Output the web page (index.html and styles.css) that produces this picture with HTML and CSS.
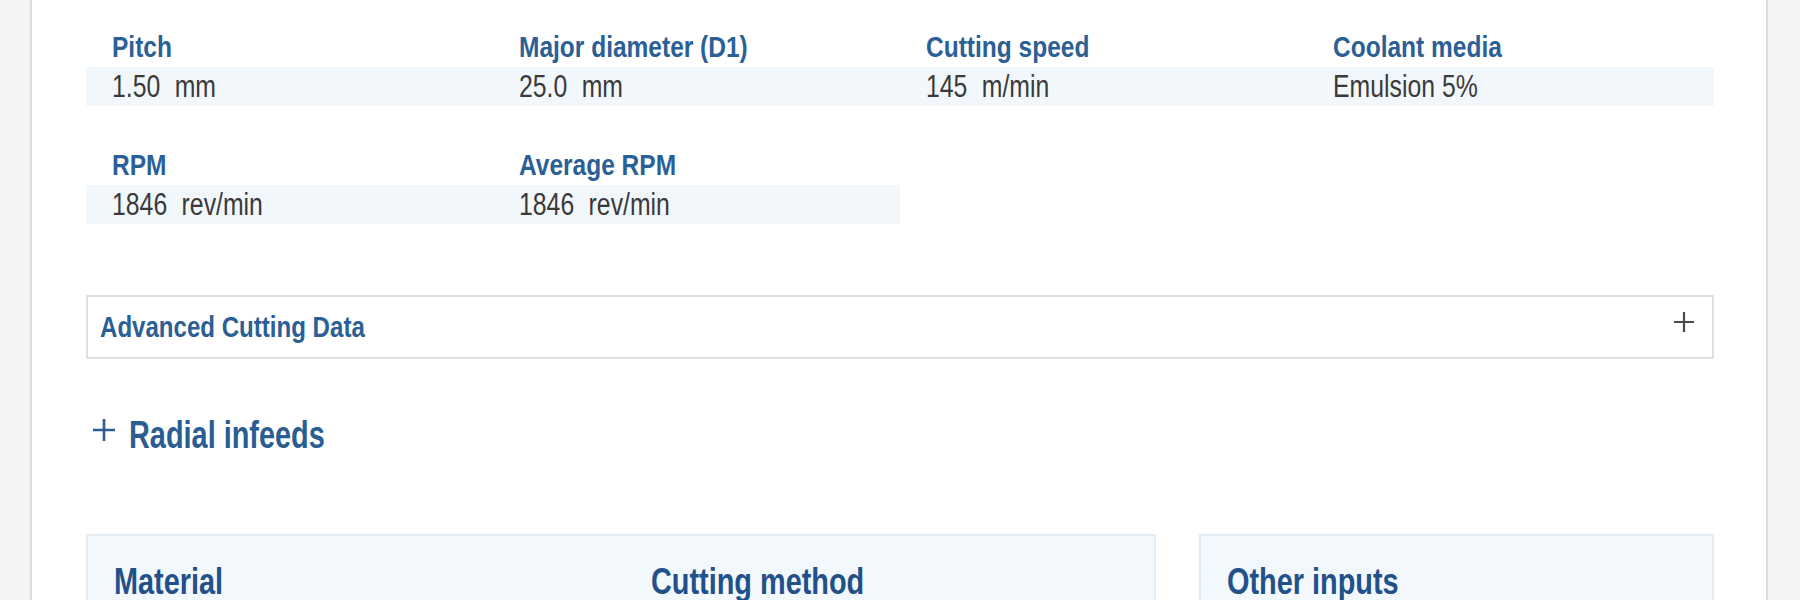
FILE: index.html
```html
<!DOCTYPE html>
<html lang="en">
<head>
<meta charset="utf-8">
<title>Cutting data</title>
<link rel="stylesheet" href="styles.css">
</head>
<body>
<div class="page">
  <div class="card">
    <div class="params">
      <div class="param"><div class="label"><span class="nt">Pitch</span></div><div class="value"><span class="nv">1.50<span class="unit">mm</span></span></div></div>
      <div class="param"><div class="label"><span class="nt">Major diameter (D1)</span></div><div class="value"><span class="nv">25.0<span class="unit">mm</span></span></div></div>
      <div class="param"><div class="label"><span class="nt">Cutting speed</span></div><div class="value"><span class="nv">145<span class="unit">m/min</span></span></div></div>
      <div class="param"><div class="label"><span class="nt">Coolant media</span></div><div class="value"><span class="nv">Emulsion 5%</span></div></div>
      <div class="param"><div class="label"><span class="nt">RPM</span></div><div class="value"><span class="nv">1846<span class="unit">rev/min</span></span></div></div>
      <div class="param"><div class="label"><span class="nt">Average RPM</span></div><div class="value"><span class="nv">1846<span class="unit">rev/min</span></span></div></div>
    </div>

    <div class="accordion">
      <span class="accordion-title">Advanced Cutting Data</span>
      <svg class="accordion-icon" width="22" height="22" viewBox="0 0 22 22"><path d="M11 1v20M1 11h20" stroke="#4a4a4a" stroke-width="2.2" fill="none"/></svg>
    </div>

    <div class="toggle">
      <svg class="toggle-icon" width="22" height="22" viewBox="0 0 22 22"><path d="M11 0v22M0 11h22" stroke="#2a5d92" stroke-width="2.6" fill="none"/></svg>
      <span class="toggle-text">Radial infeeds</span>
    </div>

    <div class="boxes">
      <div class="box box-main">
        <h3 class="box-title"><span class="ht">Material</span></h3>
        <h3 class="box-title"><span class="ht">Cutting method</span></h3>
      </div>
      <div class="box box-side">
        <h3 class="box-title"><span class="ht">Other inputs</span></h3>
      </div>
    </div>
  </div>
</div>
</body>
</html>
```

FILE: styles.css
```css
html, body {
  margin: 0;
  padding: 0;
  height: 100%;
  overflow: hidden;
}
body {
  background: #f4f4f4;
  font-family: "Liberation Sans", Arial, sans-serif;
}
.page {
  padding: 0 32px 0 30px;
}
.card {
  background: #fff;
  border-left: 2px solid #dcdcdc;
  border-right: 2px solid #dcdcdc;
  height: 760px;
  padding: 30px 52px 0 54px;
  box-sizing: border-box;
}
.params {
  display: grid;
  grid-template-columns: repeat(4, 1fr);
  row-gap: 42px;
}
.label {
  font-size: 29px;
  font-weight: 700;
  line-height: 30px;
  padding: 2px 0 5px 26px;
  color: #2b6096;
  white-space: nowrap;
}
.nt {
  display: inline-block;
  transform: scaleX(0.845);
  transform-origin: 0 50%;
}
.value {
  font-size: 31px;
  line-height: 39px;
  height: 39px;
  padding-left: 26px;
  background: #f2f7fb;
  color: #3a3a3a;
  white-space: nowrap;
}
.nv {
  display: inline-block;
  transform: scaleX(0.8);
  transform-origin: 0 50%;
}
.unit {
  margin-left: 18px;
}
.accordion {
  margin-top: 71px;
  height: 64px;
  box-sizing: border-box;
  border: 2px solid #e0e0e0;
  display: flex;
  align-items: center;
  justify-content: space-between;
  padding: 0 17px 0 12px;
}
.accordion-title {
  display: inline-block;
  font-size: 29px;
  font-weight: 700;
  color: #2b6096;
  transform: scaleX(0.83);
  transform-origin: 0 50%;
  white-space: nowrap;
}
.accordion-icon {
  margin-top: -10px;
}
.toggle {
  margin-top: 56px;
  height: 40px;
  display: flex;
  align-items: flex-start;
  gap: 14px;
  padding-left: 7px;
  font-size: 38px;
  line-height: 40px;
  font-weight: 700;
  color: #2a5d92;
}
.toggle-icon {
  margin-top: 4px;
  flex: none;
}
.toggle-text {
  display: inline-block;
  transform: scaleX(0.76);
  transform-origin: 0 50%;
  white-space: nowrap;
}
.boxes {
  margin-top: 79px;
  display: flex;
  gap: 43px;
}
.box {
  background: #f3f8fc;
  border: 2px solid #e4ecf3;
  height: 200px;
  padding: 26px 26px 0 26px;
  box-sizing: border-box;
}
.box-main {
  width: 1070px;
  display: grid;
  grid-template-columns: 1fr 1fr;
  column-gap: 60px;
  align-content: start;
}
.box-side {
  flex: 1;
}
.box-title {
  margin: 0;
  font-size: 37px;
  line-height: 40px;
  font-weight: 700;
  color: #22518a;
  white-space: nowrap;
}
.ht {
  display: inline-block;
  transform: scaleX(0.78);
  transform-origin: 0 50%;
}
```
